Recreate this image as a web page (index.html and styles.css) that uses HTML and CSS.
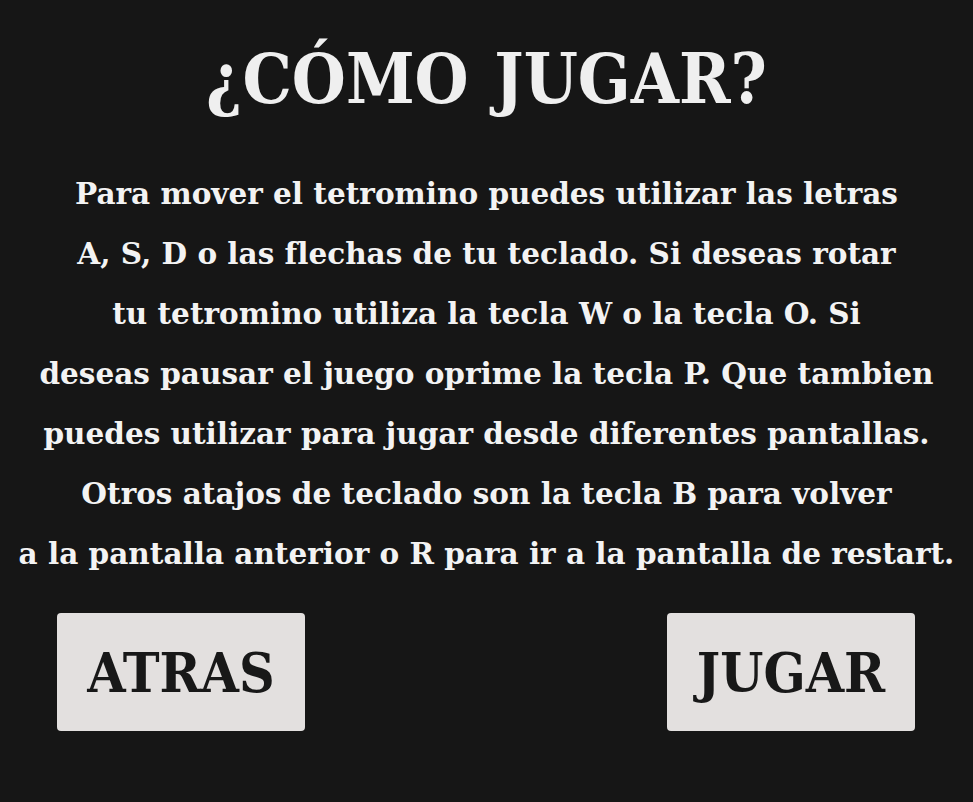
FILE: index.html
```html
<!DOCTYPE html>
<html lang="es">
<head>
<meta charset="utf-8">
<title>¿Cómo jugar?</title>
<link rel="stylesheet" href="styles.css">
</head>
<body>
<main class="screen">
  <h1 class="title">¿CÓMO JUGAR?</h1>
  <p class="instructions">Para mover el tetromino puedes utilizar las letras<br>A, S, D o las flechas de tu teclado. Si deseas rotar<br>tu tetromino utiliza la tecla W o la tecla O. Si<br>deseas pausar el juego oprime la tecla P. Que tambien<br>puedes utilizar para jugar desde diferentes pantallas.<br>Otros atajos de teclado son la tecla B para volver<br>a la pantalla anterior o R para ir a la pantalla de restart.</p>
  <div class="actions">
    <button class="btn">ATRAS</button>
    <button class="btn">JUGAR</button>
  </div>
</main>
</body>
</html>
```

FILE: styles.css
```css
html, body {
  margin: 0;
  padding: 0;
  background: #161616;
}
body {
  width: 973px;
  height: 802px;
  overflow: hidden;
  font-family: "DejaVu Serif", "Liberation Serif", serif;
  font-weight: bold;
}
.screen {
  display: flex;
  flex-direction: column;
  align-items: center;
}
.title {
  margin: 41px 0 0;
  font-family: "DejaVu Serif Condensed", "DejaVu Serif", serif;
  font-stretch: condensed;
  font-size: 69px;
  line-height: 76px;
  color: #efefef;
  font-weight: bold;
  word-spacing: 4px;
}
.instructions {
  margin: 47px 0 0;
  font-size: 29.5px;
  line-height: 60px;
  color: #f3f3f3;
  text-align: center;
  white-space: nowrap;
}
.actions {
  align-self: stretch;
  display: flex;
  justify-content: space-between;
  padding: 0 58px 0 57px;
  margin-top: 29px;
}
.btn {
  width: 248px;
  height: 118px;
  border: none;
  border-radius: 4px;
  background: #e3e0df;
  color: #181818;
  font-family: "DejaVu Serif Condensed", "DejaVu Serif", serif;
  font-stretch: condensed;
  font-weight: bold;
  font-size: 55px;
  padding: 0;
}
```
